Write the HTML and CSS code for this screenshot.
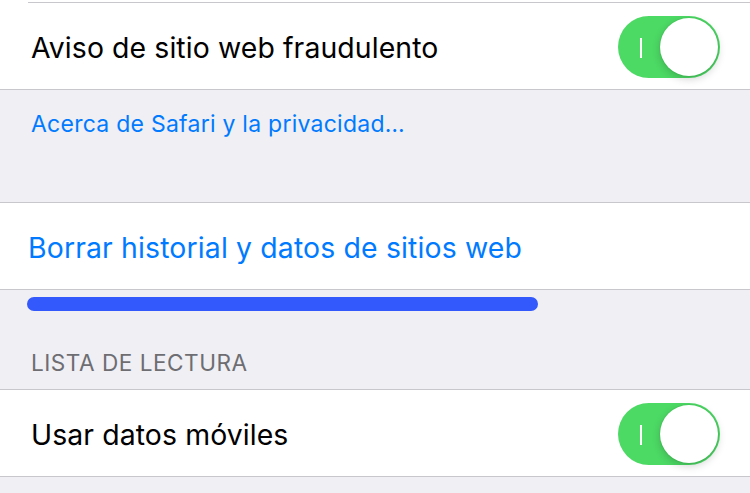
FILE: index.html
```html
<!DOCTYPE html>
<html lang="es">
<head>
<meta charset="utf-8">
<link rel="stylesheet" href="styles.css">
</head>
<body>
<div class="screen">
  <div class="group top-group">
    <div class="cut-row"></div>
    <div class="row">
      <span class="label">Aviso de sitio web fraudulento</span>
      <div class="switch"><span class="on-mark"></span><span class="knob"></span></div>
    </div>
  </div>
  <div class="footer">
    <span class="link-small">Acerca de Safari y la privacidad…</span>
  </div>
  <div class="group">
    <div class="row">
      <span class="label blue">Borrar historial y datos de sitios web</span>
    </div>
  </div>
  <div class="section-head">
    <div class="bar"></div>
    <span class="head-text">LISTA DE LECTURA</span>
  </div>
  <div class="group">
    <div class="row">
      <span class="label">Usar datos móviles</span>
      <div class="switch"><span class="on-mark"></span><span class="knob"></span></div>
    </div>
  </div>
  <div class="rest"></div>
</div>
</body>
</html>
```

FILE: styles.css
```css
* { box-sizing: border-box; }
html, body { margin: 0; padding: 0; }
body {
  width: 750px;
  height: 493px;
  overflow: hidden;
  background: #efeff4;
  font-family: Inter, "Noto Sans", "Liberation Sans", sans-serif;
}
.screen { display: flex; flex-direction: column; }
.group {
  background: #fff;
  border-top: 1px solid #c8c7cc;
  border-bottom: 1px solid #c8c7cc;
}
.top-group { border-top: none; }
.cut-row {
  height: 3px;
  border-bottom: 1px solid #c8c7cc;
  margin-left: 28px;
}
.row {
  height: 86px;
  display: flex;
  align-items: center;
  justify-content: space-between;
  padding: 0 30px 0 31px;
}
.label {
  font-size: 28.4px;
  color: #000;
  letter-spacing: 0.1px;
  margin-top: 3px;
}
.label.blue { color: #007aff; margin-left: -3px; font-size: 28.4px; letter-spacing: 0.15px; }
.switch {
  position: relative;
  width: 102px;
  height: 62px;
  border-radius: 31px;
  background: #4cd964;
  margin-top: 1px;
}
.on-mark {
  position: absolute;
  left: 22px;
  top: 22px;
  width: 2px;
  height: 20px;
  background: #fff;
}
.knob {
  position: absolute;
  right: 2px;
  top: 2px;
  width: 58px;
  height: 58px;
  border-radius: 50%;
  background: #fff;
  box-shadow: 0 3px 8px rgba(0,0,0,0.18), 0 0 0 1px rgba(0,0,0,0.04);
}
.footer {
  height: 112px;
  padding: 20px 31px 0;
}
.link-small {
  font-size: 23px;
  color: #007aff;
  letter-spacing: 0.25px;
}
.section-head {
  height: 99px;
  padding: 7px 0 0 27px;
  display: flex;
  flex-direction: column;
}
.bar {
  width: 511px;
  height: 14px;
  border-radius: 7px;
  background: #3358fb;
}
.head-text {
  margin-top: 38px;
  margin-left: 4px;
  font-size: 22.6px;
  color: #6d6d72;
  letter-spacing: 0.5px;
}
.rest { flex: 1; }
```
